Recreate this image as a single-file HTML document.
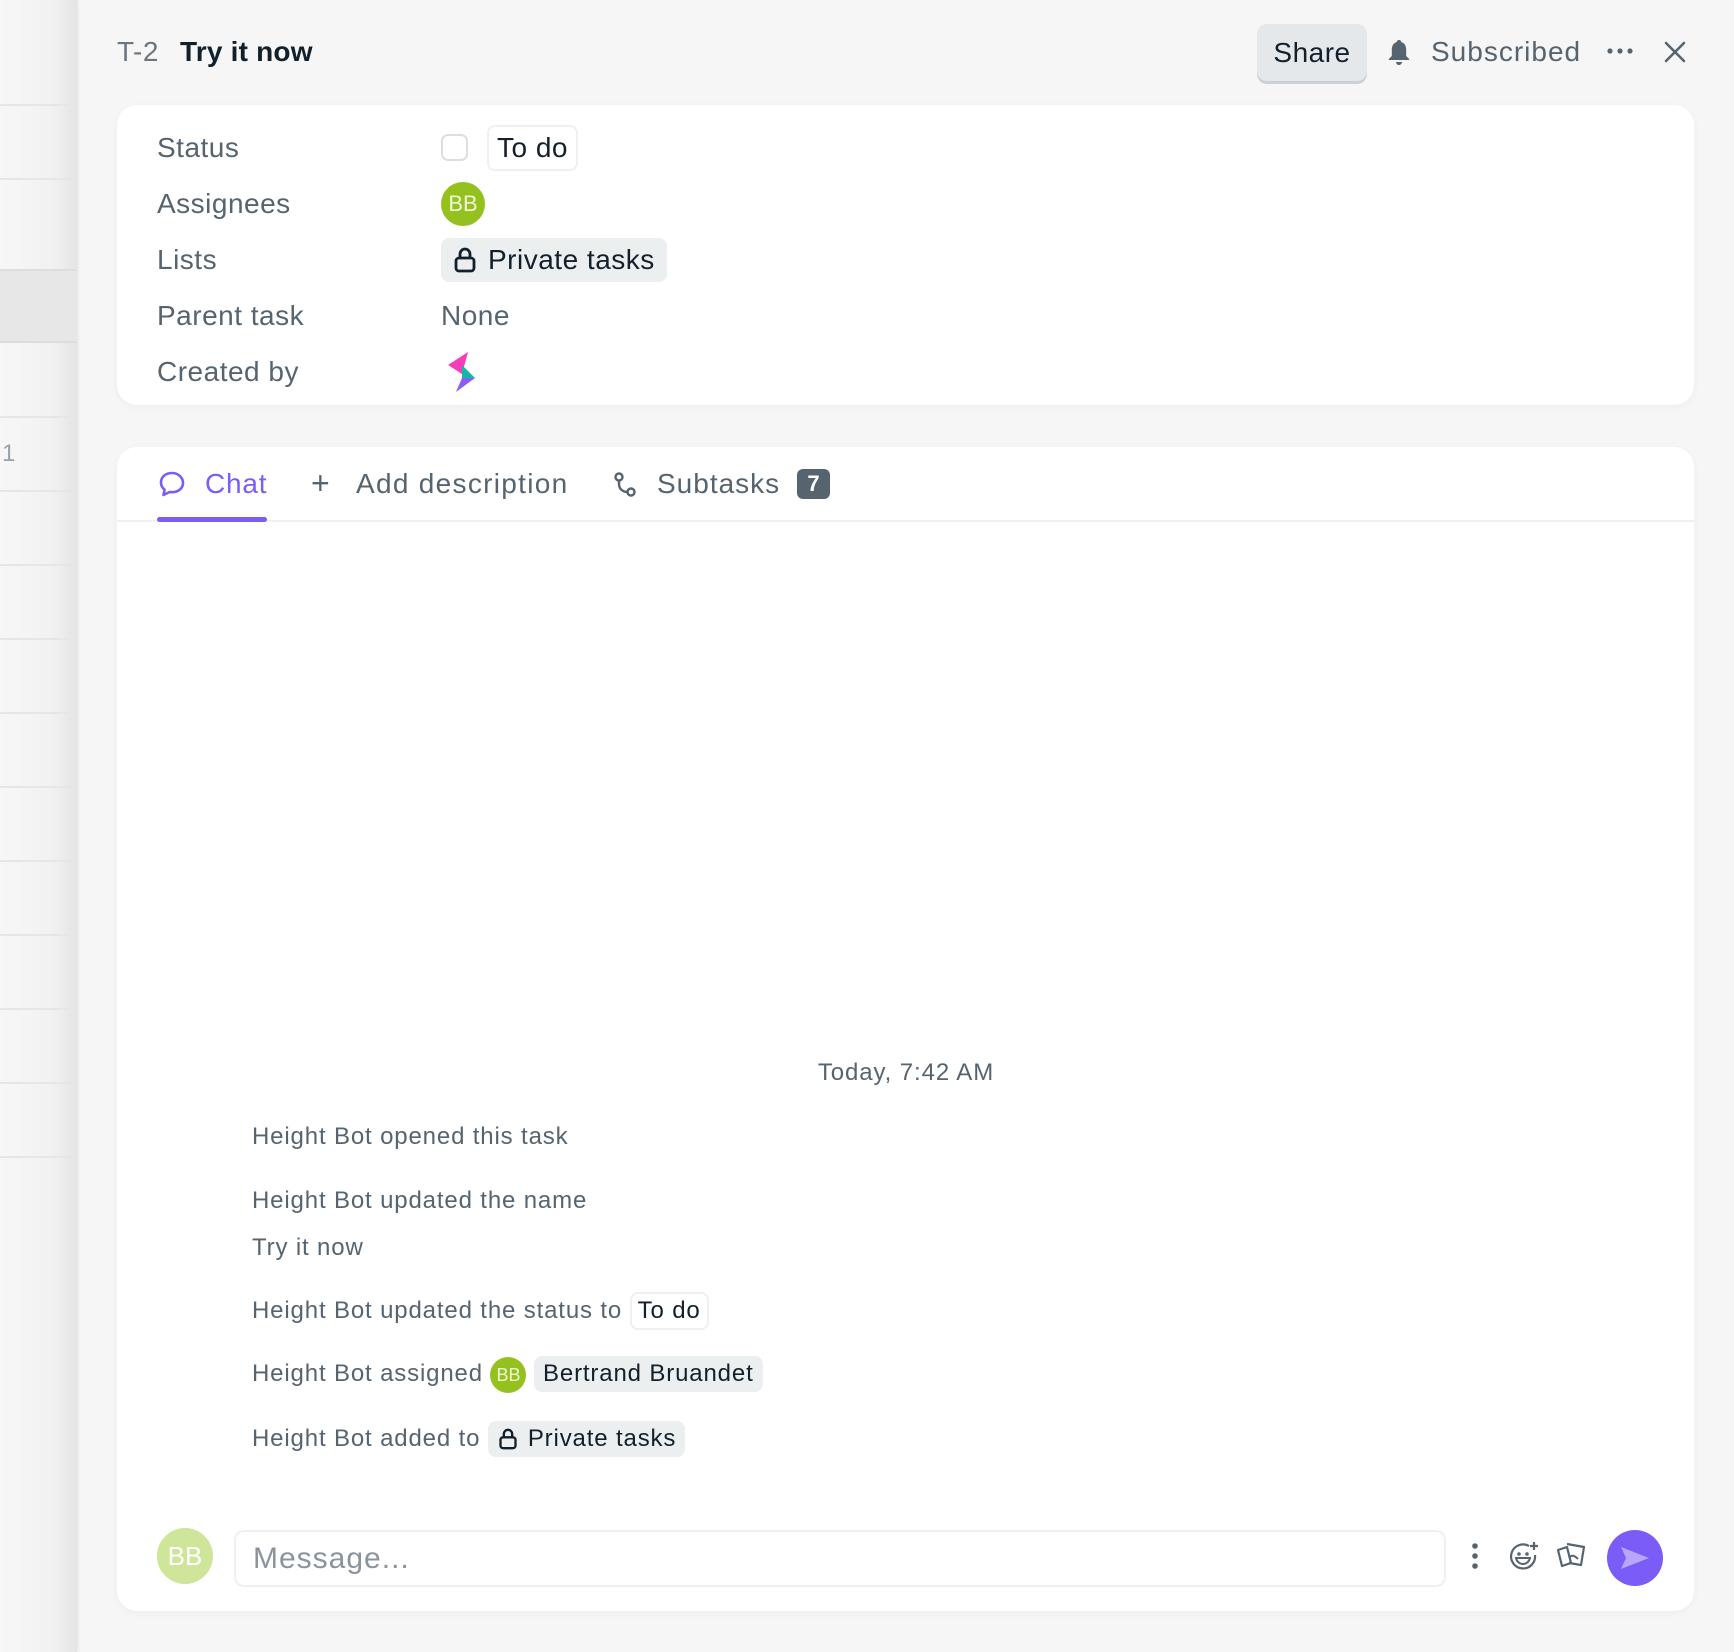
<!DOCTYPE html>
<html><head><meta charset="utf-8"><style>
*{margin:0;padding:0;box-sizing:border-box}
body{width:1734px;height:1652px;background:#f6f6f6;font-family:"Liberation Sans",sans-serif;position:relative;overflow:hidden;color:#566470;letter-spacing:0.5px}
.a{position:absolute;white-space:nowrap}
.sb{left:0;top:0;width:77px;height:1652px;background:linear-gradient(90deg,#f7f7f7,#f1f1f1 70%,#e4e4e4);box-shadow:1px 0 3px rgba(0,0,0,.08)}
.hl{position:absolute;left:0;width:77px;height:2px;background:#e6e6e6}
.card{position:absolute;background:#fff;border-radius:20px;box-shadow:0 2px 8px rgba(0,0,0,.04)}
.lbl{font-size:28px;color:#566470;left:157px;line-height:34px}
.val{font-size:28px;left:441px;line-height:34px}
.ev{font-size:24px;left:252px;line-height:30px;color:#566470;letter-spacing:0.85px}
.chip{display:inline-block;background:#eceff0;border-radius:8px;color:#12202c;padding:0 9px}
</style></head><body>
<div class="a sb"></div>
<div class="hl" style="top:104px"></div><div class="hl" style="top:178px"></div>
<div class="a" style="left:0;top:269px;width:77px;height:74px;background:#e7e7e8;border-top:2px solid #ddd;border-bottom:2px solid #ddd"></div>
<div class="hl" style="top:416px"></div><div class="hl" style="top:490px"></div><div class="hl" style="top:564px"></div><div class="hl" style="top:638px"></div><div class="hl" style="top:712px"></div><div class="hl" style="top:786px"></div><div class="hl" style="top:860px"></div><div class="hl" style="top:934px"></div><div class="hl" style="top:1008px"></div><div class="hl" style="top:1082px"></div><div class="hl" style="top:1156px"></div>
<div class="a" style="left:2px;top:440px;font-size:24px;color:#9aa3aa">1</div>

<div class="a" style="left:117px;top:35px;font-size:28px;line-height:34px;color:#6b7680">T-2</div>
<div class="a" style="left:180px;top:35px;font-size:28px;line-height:34px;color:#12202c;font-weight:bold;letter-spacing:0.2px">Try it now</div>

<div class="a" style="left:1257px;top:24px;width:110px;height:57px;background:#e5e8eb;border-radius:10px;box-shadow:0 3px 0 #cdd1d5;font-size:28px;color:#12202c;text-align:center;line-height:57px">Share</div>
<svg class="a" style="left:1386px;top:38px" width="26" height="28" viewBox="0 0 26 28"><path d="M13 2c1.5 0 2.2 1 2.2 2 3.5 1 5 4 5 8v6l3 3v1H2.8v-1l3-3v-6c0-4 1.5-7 5-8 0-1 .7-2 2.2-2z" fill="#566470"/><path d="M10 24h6a3 3 0 0 1-6 0z" fill="#566470"/></svg>
<div class="a" style="left:1431px;top:35px;font-size:28px;line-height:34px;color:#566470;letter-spacing:1px">Subscribed</div>
<svg class="a" style="left:1606px;top:46px" width="28" height="10"><circle cx="4" cy="5" r="2.6" fill="#566470"/><circle cx="14" cy="5" r="2.6" fill="#566470"/><circle cx="24" cy="5" r="2.6" fill="#566470"/></svg>
<svg class="a" style="left:1664px;top:41px" width="22" height="22"><path d="M2 2l18 18M20 2L2 20" stroke="#566470" stroke-width="2.6" stroke-linecap="round"/></svg>

<div class="card" style="left:117px;top:105px;width:1577px;height:300px"></div>
<div class="a lbl" style="top:131px">Status</div>
<div class="a lbl" style="top:187px">Assignees</div>
<div class="a lbl" style="top:243px">Lists</div>
<div class="a lbl" style="top:299px">Parent task</div>
<div class="a lbl" style="top:355px">Created by</div>
<div class="a" style="left:441px;top:134px;width:27px;height:27px;border:2px solid #dcdfe2;border-radius:7px"></div>
<div class="a" style="left:487px;top:125px;height:46px;padding:0 8px;border:2px solid #eef0f1;border-radius:8px;font-size:28px;line-height:42px;color:#12202c">To do</div>
<div class="a" style="left:441px;top:182px;width:44px;height:44px;border-radius:50%;background:#95c11f;color:#eef7d6;font-size:22px;line-height:44px;text-align:center;letter-spacing:0">BB</div>
<div class="a" style="left:441px;top:238px;height:44px;width:226px;background:#eceff0;border-radius:8px"></div>
<svg class="a" style="left:453px;top:246px" width="24" height="28" viewBox="0 0 24 28"><rect x="3" y="12" width="18" height="13" rx="3" fill="none" stroke="#12202c" stroke-width="2.8"/><path d="M7 12V8a5 5 0 0 1 10 0v4" fill="none" stroke="#12202c" stroke-width="2.8"/></svg>
<div class="a val" style="left:488px;top:243px;color:#12202c">Private tasks</div>
<div class="a val" style="top:299px;color:#566470">None</div>
<svg class="a" style="left:446px;top:352px" width="34" height="40" viewBox="0 0 34 40"><path d="M22 0L2 13l14 9z" fill="#f43fb8"/><path d="M16 13l13 13-13 0z" fill="#14b8a6"/><path d="M16 26h13L10 40z" fill="#8b5cf6"/></svg>

<div class="card" style="left:117px;top:447px;width:1577px;height:1164px"></div>
<div class="a" style="left:117px;top:520px;width:1577px;height:2px;background:#eff0f1"></div>
<svg class="a" style="left:158px;top:470px" width="28" height="28" viewBox="0 0 28 28"><path d="M14 3C7.5 3 3 7 3 12.5c0 3 1.4 5.5 3.6 7.2L5.5 25l6-3c.8.1 1.6.2 2.5.2 6.5 0 11-4 11-9.2S20.5 3 14 3z" fill="none" stroke="#7b5cf6" stroke-width="2.6" stroke-linejoin="round"/></svg>
<div class="a" style="left:205px;top:467px;font-size:28px;line-height:34px;color:#7b5cf6;letter-spacing:0.8px">Chat</div>
<div class="a" style="left:157px;top:517px;width:110px;height:5px;border-radius:3px;background:#7b5cf6"></div>
<div class="a" style="left:311px;top:466px;font-size:32px;line-height:34px;color:#566470">+</div>
<div class="a" style="left:356px;top:467px;font-size:28px;line-height:34px;color:#566470;letter-spacing:1.3px">Add description</div>
<svg class="a" style="left:613px;top:472px" width="24" height="26" viewBox="0 0 24 26"><circle cx="6" cy="5" r="3.5" fill="none" stroke="#566470" stroke-width="2.4"/><circle cx="18" cy="20" r="3.5" fill="none" stroke="#566470" stroke-width="2.4"/><path d="M6 9v3c0 5 4 8 8.5 8" fill="none" stroke="#566470" stroke-width="2.4"/></svg>
<div class="a" style="left:657px;top:467px;font-size:28px;line-height:34px;color:#566470;letter-spacing:1px">Subtasks</div>
<div class="a" style="left:797px;top:469px;width:33px;height:30px;border-radius:6px;background:#566470;color:#fff;font-size:22px;font-weight:bold;line-height:30px;text-align:center;letter-spacing:0">7</div>

<div class="a" style="left:0;width:1812px;top:1058px;text-align:center;font-size:24px;line-height:30px;color:#566470;letter-spacing:0.9px">Today, 7:42 AM</div>
<div class="a ev" style="top:1122px">Height Bot opened this task</div>
<div class="a ev" style="top:1186px">Height Bot updated the name</div>
<div class="a ev" style="top:1233px">Try it now</div>
<div class="a ev" style="top:1292px">Height Bot updated the status to <span style="display:inline-block;border:2px solid #eef0f1;border-radius:8px;padding:0 6px;color:#12202c;line-height:34px">To do</span></div>
<div class="a ev" style="top:1356px">Height Bot assigned <span style="display:inline-block;width:36px;height:36px;border-radius:50%;background:#95c11f;color:#eef7d6;font-size:18px;line-height:36px;text-align:center;vertical-align:middle;letter-spacing:0">BB</span> <span class="chip" style="line-height:36px">Bertrand Bruandet</span></div>
<div class="a ev" style="top:1421px">Height Bot added to <span class="chip" style="line-height:36px;padding-left:40px;position:relative">Private tasks<svg style="position:absolute;left:10px;top:6px" width="20" height="24" viewBox="0 0 24 28"><rect x="3" y="12" width="18" height="13" rx="3" fill="none" stroke="#12202c" stroke-width="2.8"/><path d="M7 12V8a5 5 0 0 1 10 0v4" fill="none" stroke="#12202c" stroke-width="2.8"/></svg></span></div>

<div class="a" style="left:157px;top:1528px;width:56px;height:56px;border-radius:50%;background:#cfe59a;color:#fff;font-size:26px;line-height:56px;text-align:center;letter-spacing:0">BB</div>
<div class="a" style="left:234px;top:1530px;width:1212px;height:57px;border:2px solid #eff0f1;border-radius:10px;font-size:30px;line-height:53px;padding-left:17px;color:#8b949c;letter-spacing:1px">Message...</div>
<svg class="a" style="left:1470px;top:1542px" width="10" height="28"><circle cx="5" cy="4" r="2.8" fill="#566470"/><circle cx="5" cy="14" r="2.8" fill="#566470"/><circle cx="5" cy="24" r="2.8" fill="#566470"/></svg>
<svg class="a" style="left:1508px;top:1540px" width="32" height="32" viewBox="0 0 32 32"><path d="M21 6A12 12 0 1 0 27 15" fill="none" stroke="#566470" stroke-width="2.2"/><path d="M26 2v8M22 6h8" stroke="#566470" stroke-width="2.2"/><circle cx="11" cy="14" r="1.8" fill="#566470"/><circle cx="19" cy="14" r="1.8" fill="#566470"/><path d="M8 18h14c-1 4-4 6-7 6s-6-2-7-6z" fill="none" stroke="#566470" stroke-width="2"/></svg>
<svg class="a" style="left:1555px;top:1541px" width="32" height="30" viewBox="0 0 32 30"><path d="M3 9l9-3 4 16-9 3z" fill="none" stroke="#566470" stroke-width="2.2" stroke-linejoin="round"/><path d="M12 3l17 3-3 18-12-2" fill="none" stroke="#566470" stroke-width="2.2" stroke-linejoin="round"/><path d="M14 17c3-4 6-2 9 1" fill="none" stroke="#566470" stroke-width="2"/></svg>
<div class="a" style="left:1607px;top:1530px;width:56px;height:56px;border-radius:50%;background:#7b5cf6"></div>
<svg class="a" style="left:1619px;top:1545px" width="32" height="26" viewBox="0 0 32 26"><path d="M2 2l28 11L2 24l5-11z" fill="#b8a6fb"/></svg>
</body></html>
